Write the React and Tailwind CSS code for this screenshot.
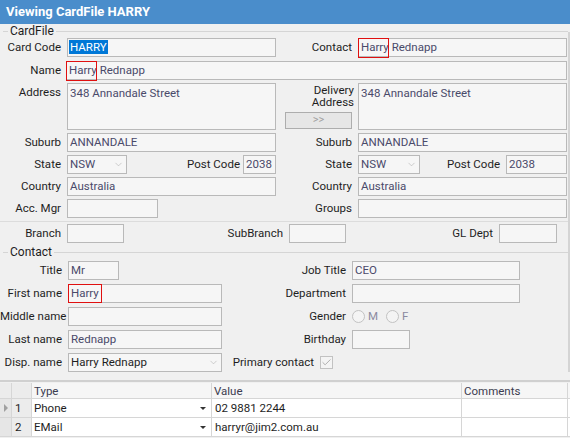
import { ChevronDown, Check } from "lucide-react";

const labelCls = "text-right text-[#1e1e1e] leading-none whitespace-nowrap";
const inputCls =
  "h-[19px] border border-[#b9b9b9] bg-[#f6f6f6] text-[#4a4a6a] px-[2px] leading-[17px] whitespace-nowrap";

function Label({ w, children }) {
  return (
    <div className={labelCls} style={{ width: w }}>
      {children}
    </div>
  );
}

function Input({ w, ml = 6, children, className = "" }) {
  return (
    <div className={`${inputCls} ${className}`} style={{ width: w, marginLeft: ml }}>
      {children}
    </div>
  );
}

function Select({ w, ml = 6, children }) {
  return (
    <div
      className={`${inputCls} flex items-center justify-between pr-0`}
      style={{ width: w, marginLeft: ml }}
    >
      <span>{children}</span>
      <span className="flex h-full w-[16px] items-center justify-center">
        <ChevronDown size={11} strokeWidth={1.3} className="text-[#b0b0b0]" />
      </span>
    </div>
  );
}

function RedBox({ w, className = "" }) {
  return <span className={`absolute top-[-1px] h-[20px] border border-[#e01010] ${className}`} style={{ width: w }} />;
}

function Radio({ label }) {
  return (
    <div className="flex items-center gap-[3px]">
      <span className="h-[13px] w-[13px] rounded-full border border-[#c2c2c2] bg-[#f4f4f4]" />
      <span className="text-[#8a8aa0]">{label}</span>
    </div>
  );
}

function Legend({ children }) {
  return (
    <div className="flex items-center h-[14px]">
      <div className="ml-[3px] w-[5px] h-px bg-[#d5d5d5]" />
      <span className="px-[2px] text-[#1e1e1e] leading-none text-[12px]">{children}</span>
      <div className="flex-1 h-px bg-[#d5d5d5]" />
    </div>
  );
}

export default function App() {
  return (
    <div className="w-[570px] h-[438px] overflow-hidden bg-[#f0f0f0] font-['Segoe_UI','Roboto',sans-serif] text-[11.5px]">
      {/* title bar */}
      <div className="h-[24px] bg-[#4a8dcb] flex items-center pl-[6px] text-white font-bold text-[13px]">
        Viewing CardFile HARRY
      </div>

      <div className="flex">
        <div className="w-[568px]">
          <Legend>CardFile</Legend>
          <div className="flex flex-col gap-[3px]">
            <div className="flex items-center">
              <Label w={61}>Card Code</Label>
              <Input w={209}>
                <span className="bg-[#0078d7] text-white px-[1px] -ml-[1px]">HARRY</span>
              </Input>
              <Label w={76}>Contact</Label>
              <Input w={209} className="relative">
                <RedBox w={31} className="left-[-1px]" />
                Harry Rednapp
              </Input>
            </div>
            <div className="flex items-center mt-[1px]">
              <Label w={61}>Name</Label>
              <Input w={501} ml={5} className="relative">
                <RedBox w={31} className="left-[-1px]" />
                Harry Rednapp
              </Input>
            </div>
            <div className="flex items-start h-[47px]">
              <div className={`${labelCls} pt-[4px]`} style={{ width: 61 }}>
                Address
              </div>
              <div className="ml-[6px] h-[47px] w-[209px] border border-[#b9b9b9] bg-[#f6f6f6] text-[#4a4a6a] px-[2px] pt-[1px]">
                348 Annandale Street
              </div>
              <div className="w-[82px] h-[47px] flex flex-col justify-between">
                <div className="self-end pr-[4px] text-right leading-[12px] pt-[1px] text-[#1e1e1e]">
                  Delivery
                  <br />
                  Address
                </div>
                <div className="ml-[9px] mb-[1px] w-[67px] h-[17px] border border-[#adadad] bg-[#e6e6e6] text-[#a0a0a0] text-[11px] flex items-center justify-center">
                  &gt;&gt;
                </div>
              </div>
              <div className="h-[47px] w-[209px] border border-[#b9b9b9] bg-[#f6f6f6] text-[#4a4a6a] px-[2px] pt-[1px]">
                348 Annandale Street
              </div>
            </div>
            <div className="flex items-center">
              <Label w={61}>Suburb</Label>
              <Input w={209}>ANNANDALE</Input>
              <Label w={76}>Suburb</Label>
              <Input w={209}>ANNANDALE</Input>
            </div>
            <div className="flex items-center">
              <Label w={61}>State</Label>
              <Select w={60}>NSW</Select>
              <Label w={113}>Post Code</Label>
              <Input w={33} ml={3}>2038</Input>
              <Label w={76}>State</Label>
              <Select w={62}>NSW</Select>
              <Label w={80}>Post Code</Label>
              <Input w={61}>2038</Input>
            </div>
            <div className="flex items-center">
              <Label w={61}>Country</Label>
              <Input w={209}>Australia</Input>
              <Label w={76}>Country</Label>
              <Input w={209}>Australia</Input>
            </div>
            <div className="flex items-center">
              <Label w={61}>Acc. Mgr</Label>
              <Input w={91}></Input>
              <Label w={194}>Groups</Label>
              <Input w={209}></Input>
            </div>
          </div>

          <div className="mt-[3px] h-px bg-[#dcdcdc]" />
          <div className="flex items-center mt-[2px]">
            <Label w={61}>Branch</Label>
            <Input w={57}></Input>
            <Label w={159}>SubBranch</Label>
            <Input w={57}></Input>
            <Label w={147}>GL Dept</Label>
            <Input w={58}></Input>
          </div>

          <div className="h-[2px]" />
          <Legend>Contact</Legend>
          <div className="flex flex-col gap-[4px] mt-[2px]">
            <div className="flex items-center">
              <Label w={62}>Title</Label>
              <Input w={51}>Mr</Input>
              <Label w={227}>Job Title</Label>
              <Input w={168}>CEO</Input>
            </div>
            <div className="flex items-center">
              <Label w={62}>First name</Label>
              <Input w={154} className="relative">
                <span className="absolute left-[-1px] top-[-1px] h-[19px] w-[34px] border border-[#e01010]" />
                Harry
              </Input>
              <Label w={124}>Department</Label>
              <Input w={168}></Input>
            </div>
            <div className="flex items-center">
              <Label w={62}>Middle name</Label>
              <Input w={154}></Input>
              <Label w={124}>Gender</Label>
              <div className="ml-[6px] flex items-center gap-[8px]">
                <Radio label="M" />
                <Radio label="F" />
              </div>
            </div>
            <div className="flex items-center">
              <Label w={62}>Last name</Label>
              <Input w={154}>Rednapp</Input>
              <Label w={124}>Birthday</Label>
              <Input w={58}></Input>
            </div>
            <div className="flex items-center">
              <Label w={62}>Disp. name</Label>
              <Select w={154}>
                <span className="text-[#1e1e1e]">Harry Rednapp</span>
              </Select>
              <Label w={92}>Primary contact</Label>
              <div className="ml-[6px] h-[13px] w-[13px] border border-[#c2c2c2] bg-[#f4f4f4] flex items-center justify-center">
                <Check size={11} strokeWidth={2} className="text-[#a8a8a8]" />
              </div>
            </div>
          </div>
        </div>
        <div className="w-[2px] mt-[8px] h-[340px] bg-[#d4d4d4]" />
      </div>

      {/* grid */}
      <div className="mt-[8px] border-t-2 border-[#d0d0d0] bg-[#f0f0f0]">
        <div className="mt-[1px] flex h-[16px] bg-[#f6f6f6] text-[#3c3c50] border-b border-[#d6d6d6]">
          <div className="w-[12px] border-r border-[#d6d6d6] bg-[#ececec]" />
          <div className="w-[20px] border-r border-[#d6d6d6] bg-[#ececec]" />
          <div className="w-[180px] border-r border-[#d6d6d6] pl-[2px] leading-[16px]">Type</div>
          <div className="w-[250px] border-r border-[#d6d6d6] pl-[2px] leading-[16px]">Value</div>
          <div className="flex-1 pl-[2px] leading-[16px] mr-[2px] border-r border-[#d6d6d6]">Comments</div>
        </div>
        {[
          ["1", "Phone", "02 9881 2244", true],
          ["2", "EMail", "harryr@jim2.com.au", false],
        ].map(([n, t, v, cur]) => (
          <div key={n} className="flex h-[19px] bg-white text-[#1e1e1e] border-b border-[#d6d6d6]">
            <div className="w-[12px] border-r border-[#d6d6d6] bg-[#e6e6e6] flex items-center justify-center">
              {cur && (
                <span className="block w-0 h-0 border-y-[4px] border-y-transparent border-l-[4px] border-l-[#a0a0a0]" />
              )}
            </div>
            <div className="w-[20px] border-r border-[#d6d6d6] bg-[#ececec] pl-[3px] leading-[18px]">{n}</div>
            <div className="w-[180px] border-r border-[#d6d6d6] pl-[2px] leading-[18px] flex justify-between pr-[5px]">
              <span>{t}</span>
              <span className="flex items-center">
                <span className="block w-0 h-0 border-x-[3px] border-x-transparent border-t-[3px] border-t-[#333]" />
              </span>
            </div>
            <div className="w-[250px] border-r border-[#d6d6d6] pl-[3px] leading-[18px]">{v}</div>
            <div className="flex-1 mr-[2px] border-r border-[#d6d6d6]" />
          </div>
        ))}
      </div>
    </div>
  );
}
